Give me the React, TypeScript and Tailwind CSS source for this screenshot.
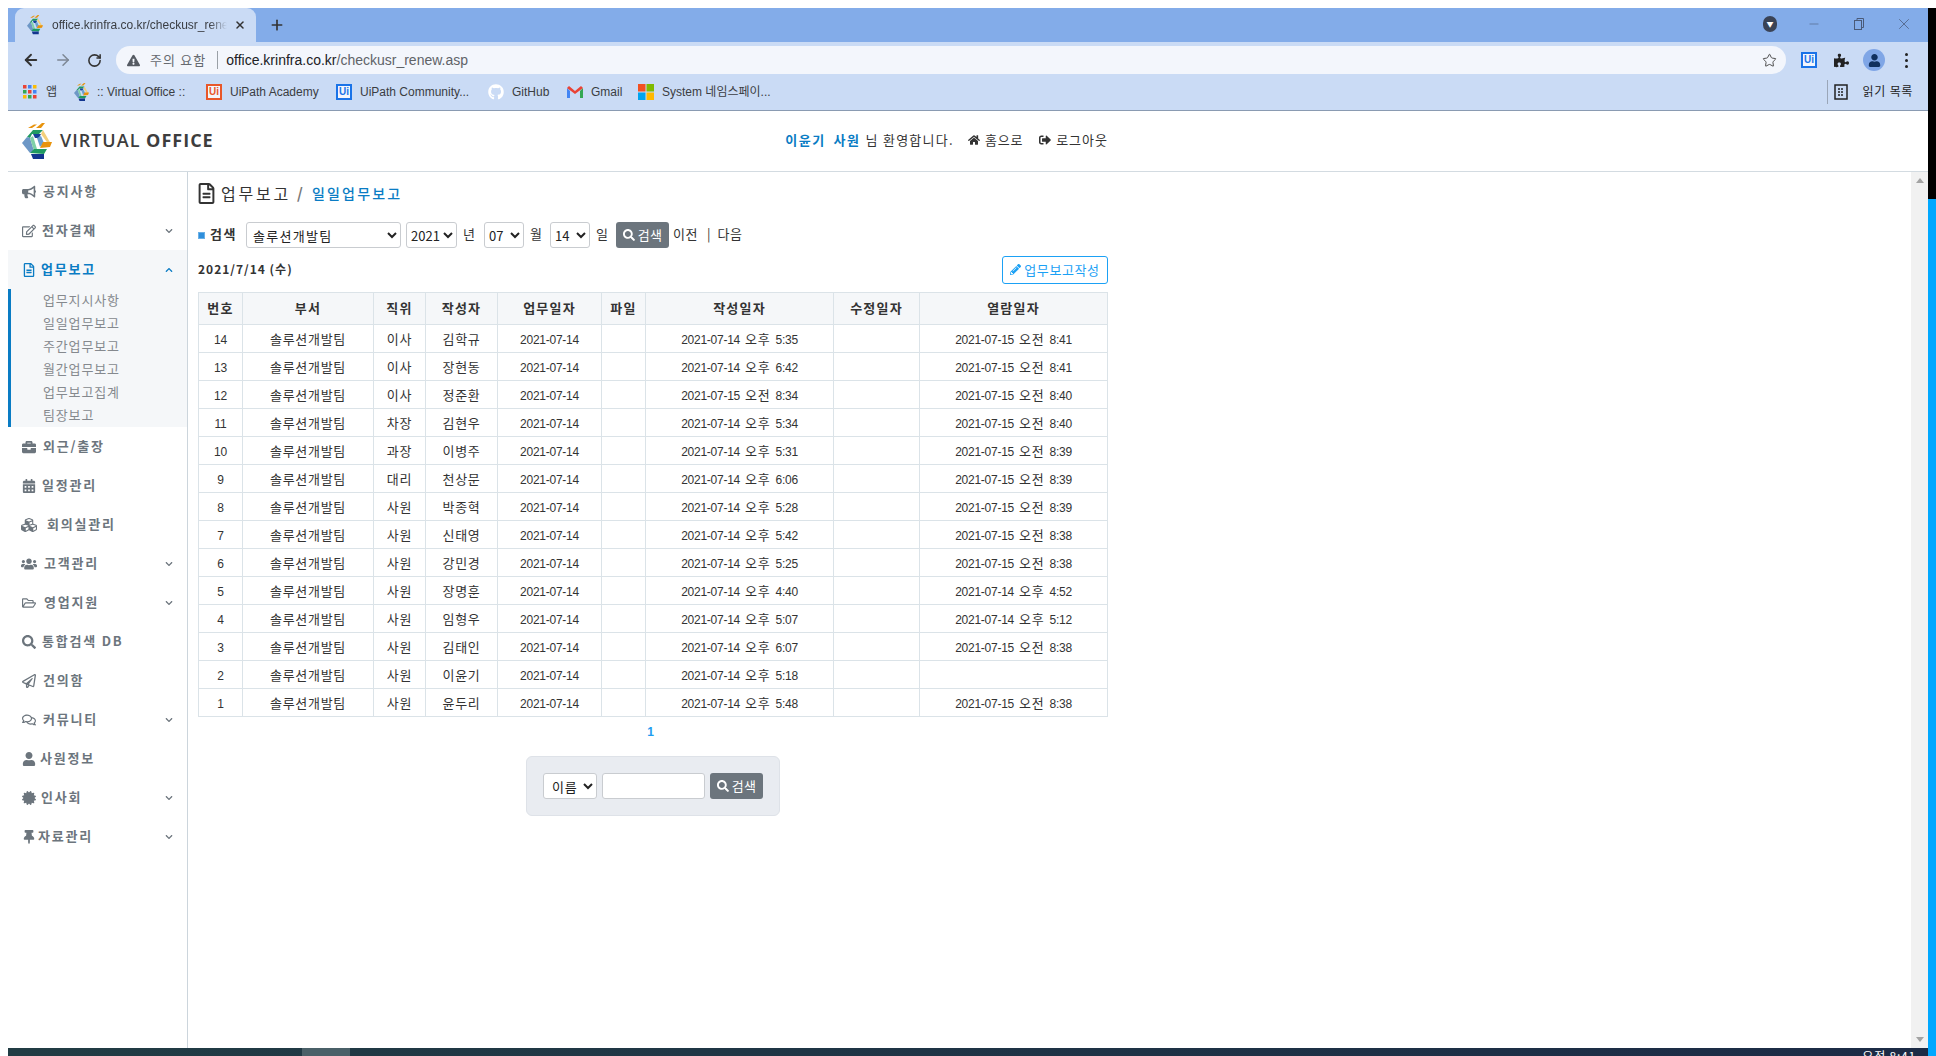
import React from "react";
import { ArrowLeft, ArrowRight, RotateCw, Star, Plus, X, Minus } from "lucide-react";
import {
  FaBullhorn, FaRegEdit, FaRegFileAlt, FaBriefcase, FaCalendarAlt, FaCubes, FaUsers, FaRegFolderOpen,
  FaSearch, FaRegPaperPlane, FaRegComments, FaUser, FaCertificate, FaThumbtack, FaChevronDown, FaChevronUp,
  FaHome, FaSignOutAlt, FaPencilAlt, FaPuzzlePiece, FaExclamationTriangle, FaGithub,
} from "react-icons/fa";

function Logo({ size }: { size: number }) {
  return (
    <svg width={size} height={size * 1.2} viewBox="0 0 30 36" className="shrink-0">
      <polygon points="6,5 12,1.5 15,1.5 10,5" fill="#e8930c" />
      <polygon points="14,5 20,0 23,0 19,5" fill="#e8930c" />
      <polygon points="5,14 11,7 21,7 17,11 10,11 8,15" fill="#1f9a62" />
      <polygon points="21,7 29,21 27,22 19,11" fill="#f3cf7a" />
      <polygon points="5,14 8,15 12,28 8,30 0,20" fill="#6d97c6" />
      <polygon points="8,15 11,13 15,26 12,28" fill="#7fd0a8" />
      <polygon points="11,11 19,11 17,15 13,15" fill="#16409a" />
      <polygon points="15,15 19,13 22,20 18,24" fill="#6aa0d0" />
      <polygon points="21,19 30,19 28,24 18,25" fill="#e8930c" />
      <polygon points="8,30 12,26 25,26 22,31" fill="#1f9a62" />
      <polygon points="9,31 22,31 22,36 11,36" fill="#12358f" />
    </svg>
  );
}

function UiBadge({ color }: { color: string }) {
  return (
    <span
      className="flex h-[16px] w-[16px] shrink-0 items-center justify-center border-2 text-[10px] font-bold font-['Liberation_Sans'] leading-none"
      style={{ borderColor: color, color, background: "#f3f6fc" }}
    >
      Ui
    </span>
  );
}

function Mixed({ text }: { text: string }) {
  const parts = text.split(/([\uac00-\ud7a3]+)/).filter(Boolean);
  return (
    <>
      {parts.map((p, i) =>
        /[\uac00-\ud7a3]/.test(p) ? (
          <span key={i} className="text-[13px] tracking-[0.7px]">{p}</span>
        ) : (
          <span key={i} className="font-['Liberation_Sans'] text-[12px] tracking-[-0.25px] [word-spacing:2px]">{p}</span>
        )
      )}
    </>
  );
}

const navTop: [string, React.ReactNode, number, boolean?][] = [
  ["공지사항", <FaBullhorn />, 43, false],
  ["전자결재", <FaRegEdit />, 42, true],
];
const navBottom: [string, React.ReactNode, number, boolean?][] = [
  ["외근/출장", <FaBriefcase />, 43],
  ["일정관리", <FaCalendarAlt />, 42],
  ["회의실관리", <FaCubes className="text-[16px] shrink-0" />, 47],
  ["고객관리", <FaUsers className="text-[16px] shrink-0" />, 44, true],
  ["영업지원", <FaRegFolderOpen />, 44, true],
  ["통합검색 DB", <FaSearch />, 42],
  ["건의함", <FaRegPaperPlane />, 43],
  ["커뮤니티", <FaRegComments />, 43, true],
  ["사원정보", <FaUser />, 40],
  ["인사회", <FaCertificate />, 41, true],
  ["자료관리", <FaThumbtack />, 38, true],
];
const subs = ["업무지시사항", "일일업무보고", "주간업무보고", "월간업무보고", "업무보고집계", "팀장보고"];

function NavRow({ label, icon, x, chev }: { label: string; icon: React.ReactNode; x: number; chev?: boolean }) {
  return (
    <div className="flex h-[39px] items-center pl-[14px] pr-[14px] text-[#6c757d]">
      <span className="flex w-[14px] shrink-0 items-center justify-center text-[14px]">{icon}</span>
      <span className="pb-[2px] text-[13px] font-bold tracking-[1.8px] whitespace-nowrap" style={{ marginLeft: x - 36 }}>{label}</span>
      {chev && <FaChevronDown className="ml-auto text-[8px]" />}
    </div>
  );
}

const columns = [44, 131, 52, 72, 104, 44, 188, 86, 188];
const heads = ["번호", "부서", "직위", "작성자", "업무일자", "파일", "작성일자", "수정일자", "열람일자"];
const rows: [number, string, string, string, string][] = [
  [14, "이사", "김학규", "2021-07-14 오후 5:35", "2021-07-15 오전 8:41"],
  [13, "이사", "장현동", "2021-07-14 오후 6:42", "2021-07-15 오전 8:41"],
  [12, "이사", "정준환", "2021-07-15 오전 8:34", "2021-07-15 오전 8:40"],
  [11, "차장", "김현우", "2021-07-14 오후 5:34", "2021-07-15 오전 8:40"],
  [10, "과장", "이병주", "2021-07-14 오후 5:31", "2021-07-15 오전 8:39"],
  [9, "대리", "천상문", "2021-07-14 오후 6:06", "2021-07-15 오전 8:39"],
  [8, "사원", "박종혁", "2021-07-14 오후 5:28", "2021-07-15 오전 8:39"],
  [7, "사원", "신태영", "2021-07-14 오후 5:42", "2021-07-15 오전 8:38"],
  [6, "사원", "강민경", "2021-07-14 오후 5:25", "2021-07-15 오전 8:38"],
  [5, "사원", "장명훈", "2021-07-14 오후 4:40", "2021-07-14 오후 4:52"],
  [4, "사원", "임형우", "2021-07-14 오후 5:07", "2021-07-14 오후 5:12"],
  [3, "사원", "김태인", "2021-07-14 오후 6:07", "2021-07-15 오전 8:38"],
  [2, "사원", "이윤기", "2021-07-14 오후 5:18", ""],
  [1, "사원", "윤두리", "2021-07-14 오후 5:48", "2021-07-15 오전 8:38"],
];

const selectCls = "h-[26px] rounded-[3px] border border-[#c9ccd0] bg-white text-[13px] text-[#222] font-['Noto_Sans_CJK_KR',sans-serif]";
const cellCls = "border border-[#dbe3e8] p-0 pb-[1px] leading-[14px]";

function SearchBtn() {
  return (
    <button className="flex h-[26px] w-[53px] items-center justify-center gap-[3px] rounded-[3px] bg-[#6c757d] pb-[1px] text-[13px] text-white tracking-[0.4px]">
      <FaSearch className="shrink-0 text-[12px]" />검색
    </button>
  );
}

function Bookmark({ ml, w, icon, label }: { ml: number; w: number; icon: React.ReactNode; label: string }) {
  return (
    <div className="flex items-center" style={{ marginLeft: ml }}>
      <span className="flex w-[16px] shrink-0 items-center justify-center">{icon}</span>
      <span className="ml-[8px] truncate text-[12px] text-[#3a3d42]" style={{ width: w }}>{label}</span>
    </div>
  );
}

export default function App() {
  return (
    <div className="flex h-[1056px] w-[1936px] overflow-hidden bg-white pl-2 pt-2 font-['Noto_Sans_CJK_KR',sans-serif] text-[#333]">
      <div className="flex h-[1048px] w-[1920px] flex-col">
        {/* tab strip */}
        <div className="flex h-[34px] shrink-0 items-end bg-[#83ace9] pl-[7px]">
          <div className="flex h-[34px] w-[241px] items-center rounded-t-[9px] bg-[#cadbf5] pl-[12px] font-['Liberation_Sans']">
            <Logo size={16} />
            <span className="ml-[9px] w-[175px] overflow-hidden whitespace-nowrap text-[12px] text-[#3a3d42] [mask-image:linear-gradient(to_right,black_90%,transparent)]">office.krinfra.co.kr/checkusr_renew.asp</span>
            <X size={12} strokeWidth={3} className="ml-[7px] text-[#333]" />
          </div>
          <Plus size={16} strokeWidth={2.5} className="mb-[9px] ml-[13px] text-[#333]" />
          <div className="mb-[9px] ml-auto flex items-center pr-[15px] text-[#4a5a78]">
            <span className="flex h-[16px] w-[14px] items-center justify-center rounded-full bg-[#3a4356] text-[7px] text-white">▼</span>
            <Minus size={14} strokeWidth={1} className="ml-[30px]" />
            <svg width="12" height="14" viewBox="0 0 12 14" className="ml-[32px]" fill="none" stroke="currentColor"><rect x="1.5" y="3.5" width="7" height="9" /><path d="M4 3V1.5h6.5v9H9" /></svg>
            <X size={18} strokeWidth={1} className="ml-[30px]" />
          </div>
        </div>
        {/* toolbar */}
        <div className="flex h-[32px] shrink-0 items-start bg-[#cadbf5] pl-[14px] pt-[4px]">
          <div className="flex h-[28px] w-[94px] items-center">
            <ArrowLeft size={18} strokeWidth={2.5} className="text-[#333]" />
            <ArrowRight size={18} strokeWidth={2} className="ml-[14px] text-[#7d8794]" />
            <RotateCw size={15} strokeWidth={2.5} className="ml-[15px] text-[#333]" />
          </div>
          <div className="flex h-[28px] w-[1670px] items-center rounded-full bg-[#f3f6fc] pl-[11px] text-[13px]">
            <FaExclamationTriangle className="text-[13px] text-[#555b63]" />
            <span className="ml-[10px] text-[13px] tracking-[1.1px] text-[#666a70]">주의 요함</span>
            <span className="ml-[11px] h-[18px] w-px bg-[#9aa0a6]" />
            <span className="ml-[8px] font-['Liberation_Sans'] text-[14px] text-[#202124]">office.krinfra.co.kr<span className="text-[#5f6368]">/checkusr_renew.asp</span></span>
            <Star size={15} strokeWidth={1.5} className="ml-auto mr-[9px] text-[#444]" />
          </div>
          <div className="flex h-[28px] items-center text-[#222]">
            <span className="ml-[15px]"><UiBadge color="#1a73e8" /></span>
            <FaPuzzlePiece className="ml-[17px] text-[15px]" />
            <span className="ml-[14px] flex h-[22px] w-[22px] items-center justify-center rounded-full bg-[#7fa6e6] text-[#10305e]"><FaUser className="text-[13px]" /></span>
            <span className="ml-[20px] flex flex-col gap-[3px]">
              <span className="h-[3px] w-[3px] rounded-full bg-[#222]" />
              <span className="h-[3px] w-[3px] rounded-full bg-[#222]" />
              <span className="h-[3px] w-[3px] rounded-full bg-[#222]" />
            </span>
          </div>
        </div>
        {/* bookmarks */}
        <div className="flex h-[37px] shrink-0 items-center border-b border-[#8a9bb2] bg-[#cadbf5] font-['Liberation_Sans','Noto_Sans_CJK_KR',sans-serif]">
          <Bookmark ml={14} w={14} label="앱" icon={
            <svg width="14" height="14" viewBox="0 0 14 14">
              {[0, 5, 10].map((y, r) => [0, 5, 10].map((x, c) => (
                <rect key={`${r}${c}`} x={x} y={y} width="3.5" height="3.5" fill={["#ea4335", "#4285f4", "#fbbc05", "#34a853", "#ea4335", "#4285f4", "#fbbc05", "#34a853", "#ea4335"][r * 3 + c]} />
              )))}
            </svg>
          } />
          <Bookmark ml={13} w={96} label=":: Virtual Office ::" icon={<Logo size={15} />} />
          <Bookmark ml={13} w={92} label="UiPath Academy" icon={<UiBadge color="#e8572a" />} />
          <Bookmark ml={14} w={113} label="UiPath Community..." icon={<UiBadge color="#1a73e8" />} />
          <Bookmark ml={15} w={42} label="GitHub" icon={<FaGithub className="text-[16px] text-white" />} />
          <Bookmark ml={13} w={36} label="Gmail" icon={
            <svg width="16" height="13" viewBox="0 0 16 13">
              <path d="M0 2v10h3V5z" fill="#4285f4" /><path d="M13 5v7h3V2z" fill="#34a853" />
              <path d="M0 2l8 6 8-6-2-2-6 5-6-5z" fill="#ea4335" />
            </svg>
          } />
          <Bookmark ml={11} w={114} label="System 네임스페이..." icon={
            <svg width="16" height="16" viewBox="0 0 16 16">
              <rect width="7.5" height="7.5" fill="#f25022" /><rect x="8.5" width="7.5" height="7.5" fill="#7fba00" />
              <rect y="8.5" width="7.5" height="7.5" fill="#00a4ef" /><rect x="8.5" y="8.5" width="7.5" height="7.5" fill="#ffb900" />
            </svg>
          } />
          <div className="ml-auto flex items-center pr-[15px]">
            <span className="h-[24px] w-px bg-[#9aa6b8]" />
            <svg width="14" height="16" viewBox="0 0 14 16" className="ml-[6px]" fill="none" stroke="#222" strokeWidth="1.5"><rect x="1" y="1" width="12" height="14" /><path d="M4 5h6M4 8h6M4 11h6" strokeDasharray="2 1" /></svg>
            <span className="ml-[15px] text-[12px] tracking-[0.6px] text-[#222]">읽기 목록</span>
          </div>
        </div>
        {/* site header */}
        <div className="flex h-[61px] shrink-0 items-center border-b border-[#d3dbe1] bg-white pl-[14px]">
          <div className="flex w-[1086px] items-center">
            <Logo size={30} />
            <span className="ml-[8px] pb-[2px] font-['Open_Sans'] text-[18px] font-semibold tracking-[1px] text-[#3d3d3d]">VIRTUAL <span className="font-bold">OFFICE</span></span>
            <div className="ml-auto flex items-center pb-[2px] text-[13px] text-[#333]">
              <span className="font-bold tracking-[1.6px] [word-spacing:3px] text-[#0a7cc4]">이윤기 사원</span>
              <span className="ml-[5px] tracking-[1.25px]">님 환영합니다.</span>
              <FaHome className="ml-[14px] text-[12px]" />
              <span className="ml-[5px] tracking-[0.8px]">홈으로</span>
              <FaSignOutAlt className="ml-[16px] text-[12px]" />
              <span className="ml-[5px] tracking-[1px]">로그아웃</span>
            </div>
          </div>
        </div>
        <div className="flex min-h-0 flex-1">
          {/* sidebar */}
          <div className="w-[180px] shrink-0 border-r border-[#ccd5dc]">
            {navTop.map(([l, i, x, c]) => <NavRow key={l} label={l} icon={i} x={x} chev={c} />)}
            <div className="bg-[#f5f7f9]">
              <div className="flex h-[39px] items-center pl-[14px] pr-[14px] text-[#0a7cc4]">
                <FaRegFileAlt className="w-[14px] shrink-0 text-[14px]" />
                <span className="ml-[5px] pb-[2px] text-[13px] font-bold tracking-[1.8px]">업무보고</span>
                <FaChevronUp className="ml-auto text-[8px]" />
              </div>
              <div className="border-l-[3px] border-[#0a7cc4] pl-[32px]">
                {subs.map((s) => (
                  <div key={s} className="flex h-[23px] items-center pb-[2px] text-[13px] tracking-[0.85px] text-[#85898e]">{s}</div>
                ))}
              </div>
            </div>
            {navBottom.map(([l, i, x, c]) => <NavRow key={l} label={l} icon={i} x={x} chev={c} />)}
          </div>
          {/* main */}
          <div className="min-w-0 flex-1 pl-[10px]">
            <div className="w-[910px]">
              <div className="flex h-[44px] items-center pb-[2px]">
                <FaRegFileAlt className="-ml-[2px] shrink-0 text-[21px] text-[#333]" />
                <span className="ml-[4px] text-[16px] tracking-[2.8px] text-[#333]">업무보고</span>
                <span className="ml-[6px] text-[15px] font-bold text-[#777]">/</span>
                <span className="ml-[9px] text-[14px] font-medium tracking-[2.2px] text-[#0a7cc4]">일일업무보고</span>
              </div>
              <div className="mt-[6px] flex h-[26px] items-center text-[13px]">
                <span className="h-[7px] w-[7px] border border-[#6ab0e6] bg-[#2f8fdc]" />
                <span className="ml-[5px] w-[36px] pb-[2px] font-bold tracking-[1.6px]">검색</span>
                <select className={selectCls + " w-[155px] pl-[2px] tracking-[1.3px]"} defaultValue="a"><option value="a">솔루션개발팀</option></select>
                <select className={selectCls + " ml-[5px] w-[51px]"} defaultValue="a"><option value="a">2021</option></select>
                <span className="ml-[6px] w-[21px] pb-[2px]">년</span>
                <select className={selectCls + " w-[40px]"} defaultValue="a"><option value="a">07</option></select>
                <span className="ml-[6px] w-[20px] pb-[2px]">월</span>
                <select className={selectCls + " w-[40px]"} defaultValue="a"><option value="a">14</option></select>
                <span className="ml-[6px] w-[20px] pb-[2px]">일</span>
                <SearchBtn />
                <span className="ml-[4px] pb-[2px] tracking-[0.5px]">이전</span>
                <span className="ml-[9px] pb-[2px]">|</span>
                <span className="ml-[7px] pb-[2px] tracking-[0.5px]">다음</span>
              </div>
              <div className="mt-[8px] flex h-[28px] items-start justify-between">
                <span className="text-[12px] leading-[25px] font-bold tracking-[1px] text-[#333]">2021/7/14 (수)</span>
                <button className="flex h-[28px] w-[106px] items-center justify-center gap-[3px] rounded-[3px] border border-[#1ba1f5] pb-[1px] text-[13px] tracking-[0.6px] text-[#1ba1f5]">
                  <FaPencilAlt className="shrink-0 text-[11px]" />업무보고작성
                </button>
              </div>
              <table className="mt-[8px] w-[909px] table-fixed border-collapse border border-[#dbe3e8] text-center">
                <colgroup>
                  {columns.map((c, i) => <col key={i} style={{ width: c }} />)}
                </colgroup>
                <thead>
                  <tr className="h-[32px] bg-[#f5f7f9]">
                    {heads.map((h) => (
                      <th key={h} className={cellCls + " text-[13px] font-bold tracking-[1.2px]"}>{h}</th>
                    ))}
                  </tr>
                </thead>
                <tbody>
                  {rows.map(([n, pos, name, d1, d2]) => (
                    <tr key={n} className="h-[28px]">
                      <td className={cellCls}><Mixed text={String(n)} /></td>
                      <td className={cellCls}><Mixed text="솔루션개발팀" /></td>
                      <td className={cellCls}><Mixed text={pos} /></td>
                      <td className={cellCls}><Mixed text={name} /></td>
                      <td className={cellCls}><Mixed text="2021-07-14" /></td>
                      <td className={cellCls}></td>
                      <td className={cellCls}><Mixed text={d1} /></td>
                      <td className={cellCls}></td>
                      <td className={cellCls}><Mixed text={d2} /></td>
                    </tr>
                  ))}
                </tbody>
              </table>
              <div className="flex h-[31px] items-center justify-center pr-[5px] pb-[2px] font-['Liberation_Sans'] text-[12px] font-bold text-[#1e9df0]">1</div>
              <div className="mx-auto mt-[8px] flex h-[60px] w-[254px] items-center justify-center gap-[5px] rounded-[6px] border border-[#dee2e8] bg-[#e9ecf1]">
                <select className={selectCls + " w-[54px] pl-[4px] tracking-[0.7px]"} defaultValue="a"><option value="a">이름</option></select>
                <input className="h-[26px] w-[103px] rounded-[3px] border border-[#c9ccd0] bg-white" />
                <SearchBtn />
              </div>
            </div>
          </div>
          {/* scrollbar */}
          <div className="flex w-[17px] shrink-0 flex-col items-center justify-between bg-[#f1f1f1] py-[6px] text-[#a3a3a3]">
            <span className="h-0 w-0 border-x-[4px] border-b-[5px] border-x-transparent border-b-[#a3a3a3]" />
            <span className="h-0 w-0 border-x-[4px] border-t-[5px] border-x-transparent border-t-[#a3a3a3]" />
          </div>
        </div>
        {/* taskbar sliver */}
        <div className="flex h-[8px] shrink-0 overflow-hidden bg-gradient-to-r from-[#213c44] to-[#1c2b46]">
          <span className="ml-[294px] h-full w-[48px] bg-[#4a6068]" />
          <span className="ml-auto mr-[12px] text-[12px] leading-[16px] tracking-[0.8px] text-white">오전 8:41</span>
        </div>
      </div>
      <div className="flex h-[1056px] w-[8px] flex-col">
        <div className="h-[191px] bg-black" />
        <div className="flex-1 bg-[#00a8ff]" />
      </div>
    </div>
  );
}
